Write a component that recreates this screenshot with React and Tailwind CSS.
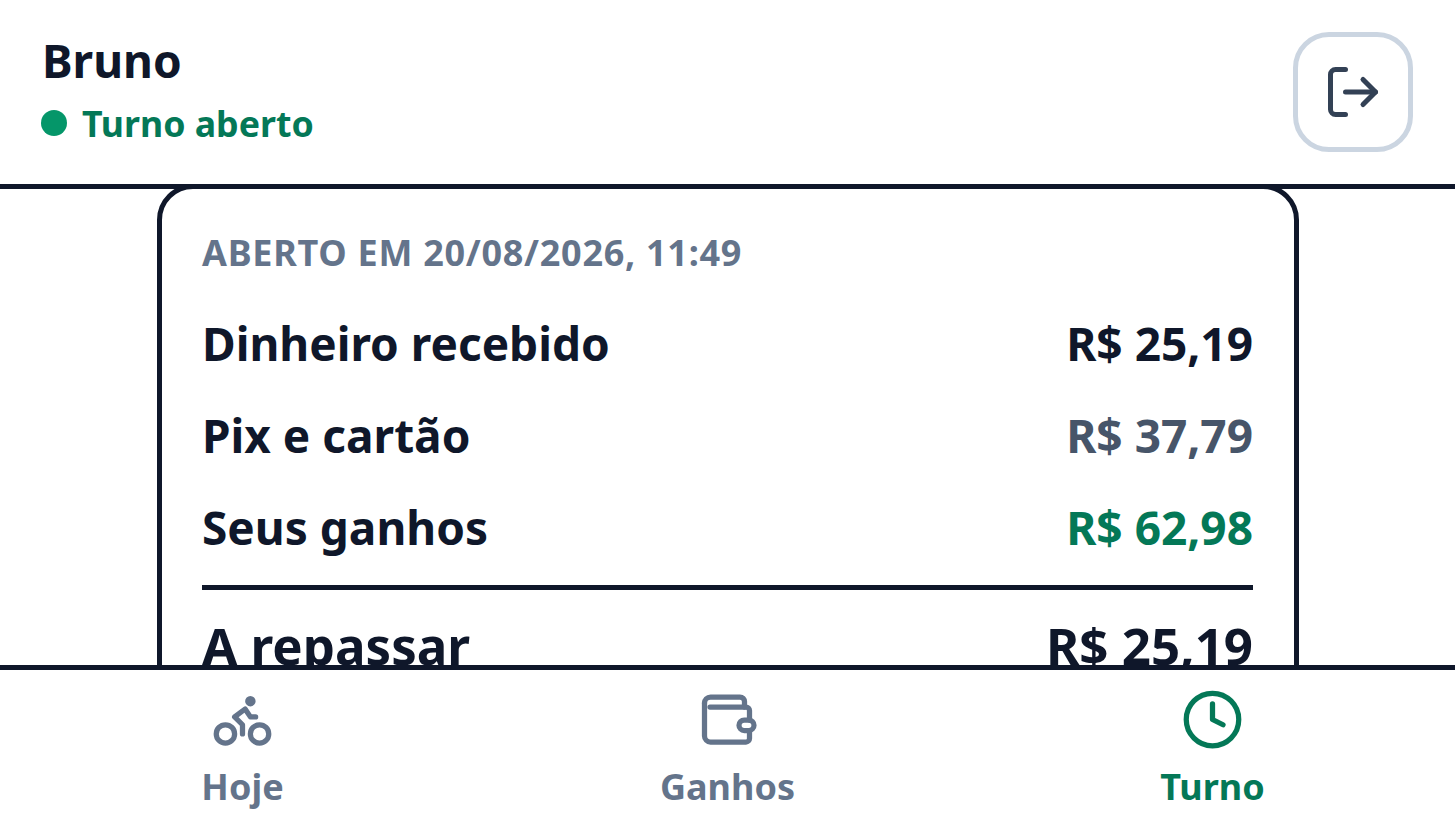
import React from "react";
import { Bike, Clock, LogOut } from "lucide-react";

const WalletIcon = () => (
  <svg width="63" height="63" viewBox="0 0 63 63" fill="none" stroke="currentColor" strokeWidth="5.25" strokeLinecap="round" strokeLinejoin="round">
    <path d="M8.5 15a6 6 0 0 1 6-6H44a4.5 4.5 0 0 1 4.5 4.5V19" />
    <path d="M8.5 15v33a6 6 0 0 0 6 6H50a3.5 3.5 0 0 0 3.5-3.5V43" />
    <path d="M14 19h36a3.5 3.5 0 0 1 3.5 3.5V32" />
    <rect x="43" y="32" width="15" height="10.5" rx="5.25" />
  </svg>
);

const Row = ({ label, value, color }) => (
  <div className="flex h-[92px] items-center justify-between text-[46px] font-bold leading-none">
    <span className="text-[#0f172a]">{label}</span>
    <span className={color}>{value}</span>
  </div>
);

const Tab = ({ icon, label, active }) => (
  <div className={`flex flex-col items-center ${active ? "text-[#047857]" : "text-[#64748b]"}`}>
    {icon}
    <span className="mt-[5.5px] text-[36px] font-bold leading-[60px]">{label}</span>
  </div>
);

export default function App() {
  return (
    <div className="flex h-screen flex-col overflow-hidden bg-white font-['Noto_Sans',sans-serif]">
      {/* Header */}
      <header className="relative z-10 flex h-[189px] shrink-0 items-center justify-between border-b-[5px] border-[#0f172a] bg-transparent px-[42px]">
        <div className="-mt-[8px]">
          <div className="text-[46px] font-bold leading-[60px] text-[#0f172a]">Bruno</div>
          <div className="mt-[9px] flex items-center gap-[15px]">
            <span className="-ml-[1px] h-[26px] w-[26px] rounded-full bg-[#059669]" />
            <span className="text-[35.7px] font-bold leading-[48px] text-[#047857]">Turno aberto</span>
          </div>
        </div>
        <button className="flex h-[120px] w-[120px] items-center justify-center rounded-[36px] border-[5px] border-[#cbd5e1] text-[#334155]">
          <LogOut size={60} strokeWidth={2} />
        </button>
      </header>

      {/* Conteudo */}
      <main className="min-h-0 flex-1 overflow-hidden">
        <div className="mx-auto -mt-[5px] h-[700px] w-[1142px] rounded-[36px] border-[5px] border-[#0f172a] bg-white px-[40.5px] pt-[40px]">
          <div className="text-[36px] font-bold uppercase leading-[48px] tracking-[0.72px] text-[#64748b]">
            Aberto em 20/08/2026, 11:49
          </div>
          <div className="mt-[20px]">
            <Row label="Dinheiro recebido" value="R$ 25,19" color="text-[#0f172a]" />
            <Row label="Pix e cartão" value="R$ 37,79" color="text-[#475569]" />
            <Row label="Seus ganhos" value="R$ 62,98" color="text-[#047857]" />
          </div>
          <div className="mt-[12px] flex items-center justify-between border-t-[5px] border-[#0f172a] pt-[22px] text-[51px] font-bold leading-[66px] text-[#0f172a]">
            <span>A repassar</span>
            <span>R$ 25,19</span>
          </div>
        </div>
      </main>

      {/* Navegacao */}
      <nav className="relative z-10 grid h-[168px] shrink-0 grid-cols-3 border-t-[5px] border-[#0f172a] bg-white pt-[18px]">
        <Tab icon={<Bike size={63} strokeWidth={2} />} label="Hoje" />
        <Tab icon={<WalletIcon />} label="Ganhos" />
        <Tab icon={<Clock size={63} strokeWidth={2} />} label="Turno" active />
      </nav>
    </div>
  );
}
